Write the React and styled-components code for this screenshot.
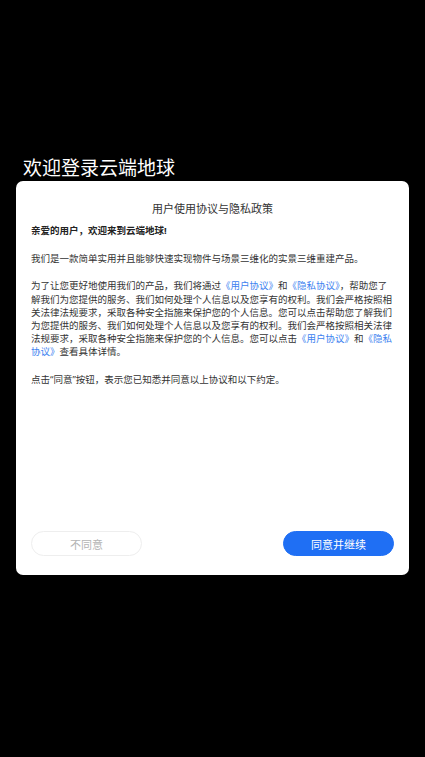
import styled, { createGlobalStyle } from "styled-components";

const GlobalStyle = createGlobalStyle`
  html, body {
    margin: 0;
    padding: 0;
    background: #000;
  }
  body {
    font-family: "Noto Sans", "Noto Sans CJK SC", sans-serif;
  }
`;

export default function App() {
  return (
    <>
      <GlobalStyle />
      <StyledPage>
        <StyledWelcome>欢迎登录云端地球</StyledWelcome>
        <StyledCard>
          <StyledCardTitle>用户使用协议与隐私政策</StyledCardTitle>
          <StyledGreeting>亲爱的用户，欢迎来到云端地球!</StyledGreeting>
          <StyledParagraph>
            我们是一款简单实用并且能够快速实现物件与场景三维化的实景三维重建产品。
          </StyledParagraph>
          <StyledParagraph>
            为了让您更好地使用我们的产品，我们将通过
            <StyledLink>《用户协议》</StyledLink>和
            <StyledLink>《隐私协议》</StyledLink>
            ，帮助您了解我们为您提供的服务、我们如何处理个人信息以及您享有的权利。我们会严格按照相关法律法规要求，采取各种安全指施来保护您的个人信息。您可以点击帮助您了解我们为您提供的服务、我们如何处理个人信息以及您享有的权利。我们会严格按照相关法律法规要求，采取各种安全指施来保护您的个人信息。您可以点击
            <StyledLink>《用户协议》</StyledLink>和
            <StyledLink>《隐私协议》</StyledLink>查看具体详情。
          </StyledParagraph>
          <StyledParagraph>
            点击“同意”按钮，表示您已知悉并同意以上协议和以下约定。
          </StyledParagraph>
          <StyledActions>
            <StyledButton>不同意</StyledButton>
            <StyledButton $primary>同意并继续</StyledButton>
          </StyledActions>
        </StyledCard>
      </StyledPage>
    </>
  );
}

const StyledPage = styled.main`
  min-height: 100vh;
  display: flex;
  flex-direction: column;
  padding: 155px 16px 0 16px;
  box-sizing: border-box;
`;

const StyledWelcome = styled.h1`
  margin: 0 0 2px 7px;
  font-family: "Noto Sans CJK SC", sans-serif;
  font-size: 19px;
  line-height: 24px;
  font-weight: 400;
  color: #fff;
`;

const StyledCard = styled.section`
  height: 394px;
  box-sizing: border-box;
  background: #fff;
  border-radius: 7px;
  padding: 19px 15px 19px 15px;
  display: flex;
  flex-direction: column;
`;

const StyledCardTitle = styled.h2`
  margin: 0 0 8px 0;
  text-align: center;
  font-family: "Noto Sans CJK SC", sans-serif;
  font-size: 11px;
  line-height: 16px;
  font-weight: 400;
  color: #333;
`;

const StyledGreeting = styled.p`
  margin: 0 0 15px 0;
  font-size: 9.5px;
  line-height: 13.2px;
  font-weight: 700;
  color: #222;
`;

const StyledParagraph = styled.p`
  margin: 0 0 14px 0;
  font-size: 9.5px;
  line-height: 13.2px;
  color: #333;
`;

const StyledLink = styled.span`
  color: #3d82f0;
`;

const StyledActions = styled.div`
  margin-top: auto;
  display: flex;
  justify-content: space-between;
  align-items: center;
`;

const StyledButton = styled.button`
  width: 111px;
  height: 25px;
  border-radius: 13px;
  font-family: "Noto Sans CJK SC", sans-serif;
  font-size: 11px;
  padding: 0;
  border: 1px solid ${(p) => (p.$primary ? "#1f6ff4" : "#eeeeee")};
  background: ${(p) => (p.$primary ? "#1f6ff4" : "#fff")};
  color: ${(p) => (p.$primary ? "#fff" : "#b4b4b4")};
`;
